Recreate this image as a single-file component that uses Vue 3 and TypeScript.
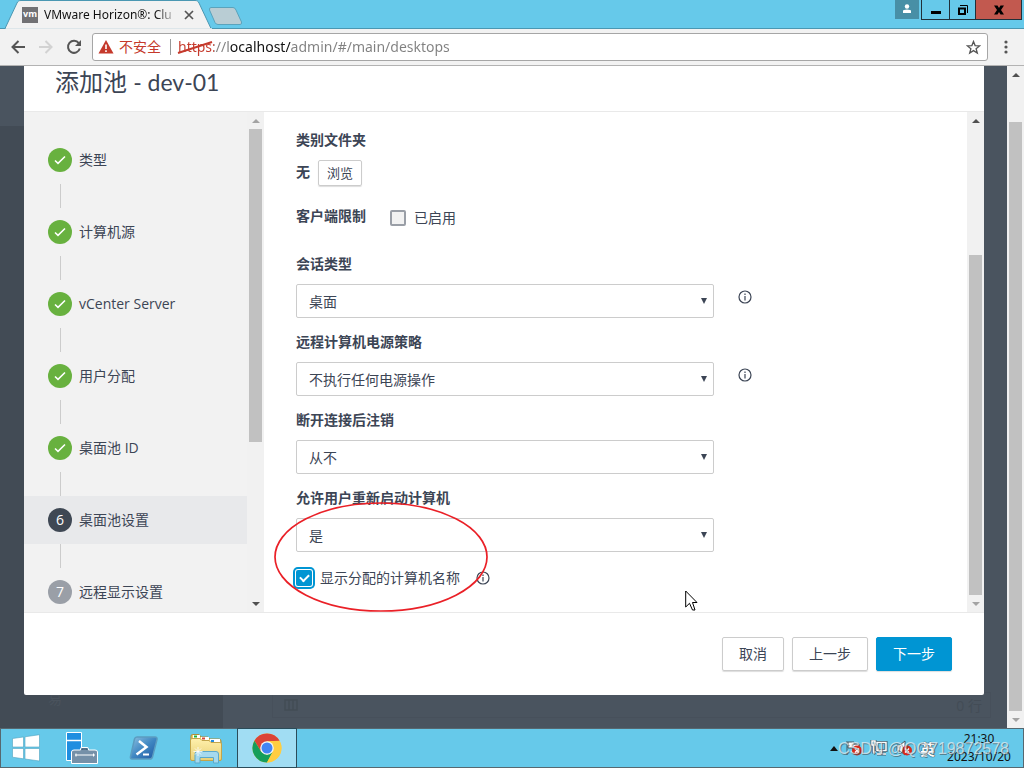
<script setup lang="ts">
import { ref } from 'vue'

interface Step {
  label: string
  state: 'done' | 'current' | 'todo'
}

interface SelectField {
  id: string
  label: string
  options: string[]
  info: boolean
}

const steps: Step[] = [
  { label: '类型', state: 'done' },
  { label: '计算机源', state: 'done' },
  { label: 'vCenter Server', state: 'done' },
  { label: '用户分配', state: 'done' },
  { label: '桌面池 ID', state: 'done' },
  { label: '桌面池设置', state: 'current' },
  { label: '远程显示设置', state: 'todo' },
]

const fields: SelectField[] = [
  { id: 'session-type', label: '会话类型', options: ['桌面'], info: true },
  { id: 'power-policy', label: '远程计算机电源策略', options: ['不执行任何电源操作'], info: true },
  { id: 'logoff', label: '断开连接后注销', options: ['从不'], info: false },
]

const address = ref('https://localhost/admin/#/main/desktops')
const restricted = ref(false)
const showName = ref(true)
</script>

<template>
  <div class="screen">
    <header class="tabstrip">
      <div class="tab">
        <svg class="tab-shape" viewBox="0 0 208 29" preserveAspectRatio="none" aria-hidden="true">
          <path d="M0 28.5 L12 3 C13 1 14 .5 16 .5 H190 C192 .5 193 1 194 3 L206 28.5" fill="#f2f2f2" stroke="#4a97b2" />
          <path d="M1 29 H207" stroke="#f2f2f2" stroke-width="1.4" />
        </svg>
        <span class="favicon">vm</span>
        <span class="tab-title">VMware Horizon®: Clu</span>
        <button class="tab-close" aria-label="Close tab">
          <svg width="10" height="10" viewBox="0 0 10 10"><path d="M1 1 9 9M9 1 1 9" stroke="#555" stroke-width="1.7" /></svg>
        </button>
      </div>
      <button class="new-tab" aria-label="New tab">
        <svg width="36" height="19" viewBox="0 0 36 19"><path d="M3 .5H25Q27 .5 28 3L33.500 15Q34 17.500 32 17.500H10Q8 17.500 7 15.500L1.500 3Q1 .5 3 .5Z" fill="#b9cdd4" stroke="#5aa3bc" /></svg>
      </button>
      <div class="window-buttons">
        <button class="wb user" aria-label="User">
          <svg width="10" height="10" viewBox="0 0 10 10" fill="#fff"><circle cx="5" cy="2.500" r="2.200" /><path d="M1 9V7Q1 5.500 5 5.500T9 7V9Z" /></svg>
        </button>
        <button class="wb min" aria-label="Minimize"><svg width="10" height="10" viewBox="0 0 10 10"><path d="M0 6H10V9H0Z" /></svg></button>
        <button class="wb restore" aria-label="Restore">
          <svg width="10" height="10" viewBox="0 0 10 10" fill="none" stroke="#000"><path d="M1 3.500H7V9H1Z" stroke-width="2" /><path d="M2 .5H9.500V8" /></svg>
        </button>
        <button class="wb close" aria-label="Close"><svg width="10" height="10" viewBox="0 0 10 10"><path d="M0 .5H3.500L5 3 6.500.5H10L7 5 10 9.500H6.500L5 7 3.500 9.500H0L3 5Z" /></svg></button>
      </div>
    </header>

    <nav class="toolbar">
      <button class="nav-btn" aria-label="Back"><svg width="16" height="16" viewBox="0 0 16 16"><path d="M15 8H2.500M8.500 2 2.500 8 8.500 14" fill="none" stroke="#555" stroke-width="2" /></svg></button>
      <button class="nav-btn" aria-label="Forward"><svg width="16" height="16" viewBox="0 0 16 16"><path d="M1 8H13.500M7.500 2 13.500 8 7.500 14" fill="none" stroke="#d2d2d2" stroke-width="2" /></svg></button>
      <button class="nav-btn" aria-label="Reload"><svg width="16" height="16" viewBox="0 0 16 16"><path d="M12.800 4.200A6 6 0 1 0 13.800 9.500" fill="none" stroke="#555" stroke-width="2" /><path d="M15 1V7H9Z" fill="#555" /></svg></button>
      <div class="address">
        <svg class="warn" width="16" height="14" viewBox="0 0 16 14"><path d="M8 0 15.500 13.500H.5Z" fill="#c5392b" /><path d="M7.200 4.500H8.800V9H7.200ZM7.200 10.200H8.800V12H7.200Z" fill="#fff" /></svg>
        <span class="unsafe">不安全</span>
        <span class="divider"></span>
        <div class="url-wrap">
          <input v-model="address" class="url" type="text" aria-label="Address" />
          <svg class="strike" width="38" height="16" viewBox="0 0 38 16"><path d="M1 14 35 3" stroke="#c5392b" stroke-width="2" /></svg>
        </div>
        <button class="star" aria-label="Bookmark"><svg width="15" height="15" viewBox="0 0 15 15"><path d="M7.500 1.500 9.100 5.600 13.600 5.900 10.100 8.700 11.300 13 7.500 10.600 3.700 13 4.900 8.700 1.400 5.900 5.900 5.600Z" fill="none" stroke="#555" stroke-width="1.300" /></svg></button>
      </div>
      <button class="menu" aria-label="Menu"><svg width="4" height="14" viewBox="0 0 4 14" fill="#555"><circle cx="2" cy="2" r="1.600" /><circle cx="2" cy="7" r="1.600" /><circle cx="2" cy="12" r="1.600" /></svg></button>
    </nav>

    <main class="page">
      <div class="backdrop" aria-hidden="true">
        <div class="back-nav"><span>易</span></div>
        <div class="back-main">
          <div class="back-box"><svg width="14" height="12" viewBox="0 0 14 12"><path d="M1 1H13V11H1ZM5 1V11M9 1V11" fill="none" stroke="#434c56" stroke-width="1.500" /></svg><span>0 行</span></div>
        </div>
      </div>

      <div class="stage">
        <section class="modal" role="dialog" aria-labelledby="dialog-title">
          <h1 id="dialog-title" class="modal-title">添加池 <span class="pool">- dev-01</span></h1>
          <div class="modal-body">
            <ol class="steps">
              <li v-for="(step, i) in steps" :key="step.label" class="step">
                <button class="step-btn" :class="step.state">
                  <span class="badge">
                    <svg v-if="step.state === 'done'" width="12" height="10" viewBox="0 0 12 10"><path d="M1 5.500 4 8.300 11 1.500" fill="none" stroke="#fff" stroke-width="1.600" /></svg>
                    <template v-else>{{ i + 1 }}</template>
                  </span>
                  <span>{{ step.label }}</span>
                </button>
              </li>
            </ol>
            <div class="scroll side-scroll"><i class="up off"></i><b class="lead"></b><b class="thumb"></b><b class="rest"></b><i class="down"></i></div>

            <form class="content" @submit.prevent>
              <div class="label">类别文件夹</div>
              <div class="folder"><span class="none">无</span><button type="button" class="browse">浏览</button></div>
              <div class="restrict">
                <span class="label">客户端限制</span>
                <label class="check"><input v-model="restricted" type="checkbox" />已启用</label>
              </div>
              <div v-for="f in fields" :key="f.id" class="field">
                <label class="label" :for="f.id">{{ f.label }}</label>
                <div class="control">
                  <div class="select-wrap">
                    <select :id="f.id"><option v-for="o in f.options" :key="o">{{ o }}</option></select>
                  </div>
                  <svg v-if="f.info" class="info" width="14" height="14" viewBox="0 0 14 14"><circle cx="7" cy="7" r="6" fill="none" stroke="#3c4555" stroke-width="1.200" /><path d="M7 3.500V5M7 6V10.500" fill="none" stroke="#3c4555" stroke-width="1.200" /></svg>
                </div>
              </div>
              <div class="marked">
                <div class="field">
                  <label class="label" for="restart">允许用户重新启动计算机</label>
                  <div class="control"><div class="select-wrap"><select id="restart"><option>是</option></select></div></div>
                </div>
                <div class="name-row">
                  <label class="check"><input v-model="showName" type="checkbox" />显示分配的计算机名称</label>
                  <svg width="14" height="14" viewBox="0 0 14 14"><circle cx="7" cy="7" r="6" fill="none" stroke="#3c4555" stroke-width="1.200" /><path d="M7 3.500V5M7 6V10.500" fill="none" stroke="#3c4555" stroke-width="1.200" /></svg>
                </div>
                <svg class="ellipse" width="214" height="110" viewBox="0 0 214 110" aria-hidden="true"><ellipse cx="107" cy="55" rx="106" ry="54" fill="none" stroke="#ea2027" stroke-width="1.700" /></svg>
              </div>
            </form>
            <div class="scroll main-scroll"><i class="up"></i><b class="lead"></b><b class="thumb"></b><b class="rest"></b><i class="down off"></i></div>
          </div>
          <footer class="modal-footer">
            <button class="btn">取消</button>
            <button class="btn">上一步</button>
            <button class="btn primary">下一步</button>
          </footer>
        </section>
      </div>
      <div class="scroll page-scroll"><i class="up"></i><b class="lead"></b><b class="thumb"></b><b class="rest"></b><i class="down off"></i></div>
    </main>

    <footer class="taskbar">
      <button class="start" aria-label="Start">
        <svg width="28" height="28" viewBox="0 0 28 28"><path d="M.5 4.500 11.500 3V13H.5ZM13 2.800 27.500.7V13H13ZM.5 14.500H11.500V24.800L.5 23.200ZM13 14.500H27.500V27L13 25Z" fill="#fff" stroke="#4fa3bf" stroke-width=".6" /></svg>
      </button>
      <button class="task" aria-label="Server Manager">
        <svg width="34" height="34" viewBox="0 0 34 34"><path d="M1.500 1.500H16.500V29.500H1.500Z" fill="#1f8ee0" stroke="#fff" /><path d="M1.500 9.500H16.500" stroke="#fff" stroke-width="1.500" /><path d="M15.500 19V17.500Q15.500 16.500 17 16.500H22Q23.500 16.500 23.500 17.500V19H30Q32.500 19 32.500 21V32.500H6.500V21Q6.500 19 9 19Z" fill="#7590a8" stroke="#fff" /><path d="M17 19V18H22V19" fill="none" stroke="#34556e" /><path d="M10 24H30M11 22.500V25.500M28.500 22.500V25.500" stroke="#fff" /></svg>
      </button>
      <button class="task" aria-label="PowerShell">
        <svg width="30" height="26" viewBox="0 0 30 26"><defs><linearGradient id="ps" x1="0" y1="0" x2="1" y2="1"><stop offset="0" stop-color="#8fc2e2" /><stop offset=".5" stop-color="#3f87c2" /><stop offset="1" stop-color="#1f55a0" /></linearGradient></defs><path d="M8 2H26Q28.500 2 28 4.500L23.500 22Q23 24 20.500 24H3Q1 24 1.500 21.500L5.500 4Q6 2 8 2Z" fill="url(#ps)" stroke="#5b9cc0" stroke-width="1.500" /><path d="M10 6 17.500 12 7.500 19.500" fill="none" stroke="#fff" stroke-width="2.500" /><path d="M14 19.500H20" stroke="#fff" stroke-width="2" /></svg>
      </button>
      <button class="task" aria-label="File Explorer">
        <svg width="34" height="32" viewBox="0 0 34 32"><defs><linearGradient id="fo" x1="0" y1="0" x2="0" y2="1"><stop offset="0" stop-color="#fff0ad" /><stop offset="1" stop-color="#e8d075" /></linearGradient></defs><path d="M2 28V4Q2 2.500 3.500 2.500H10L12 5H19L21 7H30Q32 7 32 9V28Z" fill="#eacb68" stroke="#b18f36" /><path d="M4 3H11V6H4ZM12 5H20V8H12ZM21 7H31V10H21Z" fill="#fff" /><path d="M5 3.500H8V5.500H5Z" fill="#20b23b" /><path d="M13 5.500H16V7.500H13Z" fill="#d84836" /><path d="M22 8H25V10H22Z" fill="#248de0" /><path d="M1.500 8Q1.500 6.500 3 6.500H11L13 8.500H20L22 10.500H31Q32.500 10.500 32.500 12V27Q32.500 28.500 31 28.500H3Q1.500 28.500 1.500 27Z" fill="url(#fo)" stroke="#c3a54b" /><path d="M6 31V22Q6 19.500 8.500 19.500H27Q29.500 19.500 29.500 22V31H24.500V25.500H11V31Z" fill="#a5d9ee" stroke="#5ba9ca" /><path d="M9 15V24M4.500 19.500H13.500M6 16.500 12 22.500M12 16.500 6 22.500" stroke="#fff" stroke-width=".8" /></svg>
      </button>
      <button class="task active" aria-label="Chrome">
        <svg width="30" height="30" viewBox="0 0 30 30"><circle cx="15" cy="15" r="14.500" fill="#ffcd40" /><path d="M2.440 7.750A14.500 14.500 0 0 1 27.560 7.750L15 8.200 9.100 18.500Z" fill="#db4437" /><path d="M2.440 7.750 9.100 18.500 15 21.800 20.900 18.400 15 29.500A14.500 14.500 0 0 1 2.440 7.750Z" fill="#159e5b" /><path d="M15 8.200H27.800A14.500 14.500 0 0 1 15 29.500L20.900 18.400Z" fill="#ffcd40" /><circle cx="15" cy="15" r="6.800" fill="#f4f7f5" /><circle cx="15" cy="15" r="5.500" fill="#4285f4" /></svg>
      </button>
      <div class="tray">
        <svg width="8" height="5" viewBox="0 0 8 5"><path d="M0 5 4 0 8 5Z" fill="#111" /></svg>
        <svg width="18" height="16" viewBox="0 0 18 16"><path d="M2 1V15M3 2H9V4H14V10H8V8H3Z" fill="#fff" stroke="#455761" /><circle cx="12" cy="10.500" r="5" fill="#d9291c" /><path d="M10 8.500 14 12.500M14 8.500 10 12.500" stroke="#fff" stroke-width="1.300" /></svg>
        <svg width="18" height="16" viewBox="0 0 18 16" fill="none" stroke="#fff" stroke-width="1.500"><path d="M7 2.500H16V10.500H7ZM11.500 11V14M7 14H16M2 1H5V5H2ZM3.500 5V12H6" stroke="#3c5967" stroke-width="3" /><path d="M7 2.500H16V10.500H7ZM11.500 11V14M7 14H16M2 1H5V5H2ZM3.500 5V12H6" /></svg>
        <svg width="18" height="16" viewBox="0 0 18 16"><path d="M2 5H5L10 1V15L5 11H2Z" fill="#fff" stroke="#455761" /><circle cx="12" cy="10.500" r="5" fill="#d9291c" /><path d="M10 8.500 14 12.500M14 8.500 10 12.500" stroke="#fff" stroke-width="1.300" /></svg>
        <span class="ime">英</span>
      </div>
      <div class="clock"><span>21:30</span><span>2023/10/20</span></div>
      <span class="watermark">CSDN @QQ719872578</span>
    </footer>

    <svg class="pointer" width="13" height="21" viewBox="0 0 13 21" aria-hidden="true"><path d="M.7 1V17L4.500 13.300 7.500 20H10L7.500 12.500H12Z" fill="#fff" stroke="#000" /></svg>
  </div>
</template>

<style>
html,
body {
  margin: 0;
  overflow: hidden;
}
</style>

<style scoped>
.screen,
.screen * {
  box-sizing: border-box;
}
.screen {
  position: relative;
  display: flex;
  flex-direction: column;
  height: 100vh;
  font-family: 'Open Sans', 'Noto Sans CJK SC', sans-serif;
  font-size: 14px;
  color: #3c4555;
}
button,
input,
select {
  margin: 0;
  padding: 0;
  border: 0;
  background: none;
  font: inherit;
  color: inherit;
}
svg {
  display: block;
  flex: none;
}

.tabstrip {
  display: flex;
  height: 29px;
  padding-left: 5px;
  background: #66c9ea;
  border-bottom: 1px solid #4a97b2;
}
.tab {
  position: relative;
  display: flex;
  align-items: center;
  width: 208px;
  height: 29px;
  padding-left: 17px;
}
.tab-shape {
  position: absolute;
  inset: 0;
  width: 100%;
  height: 100%;
}
.favicon {
  position: relative;
  width: 16px;
  height: 16px;
  background: #717174;
  color: #fff;
  font: bold 9px/14px 'Open Sans', sans-serif;
  text-align: center;
}
.tab-title {
  position: relative;
  width: 133px;
  margin-left: 6px;
  overflow: hidden;
  font-family: 'Noto Sans', sans-serif;
  font-size: 12px;
  line-height: 18px;
  white-space: nowrap;
  background: linear-gradient(90deg, #111 112px, #e5e5e5 133px);
  background-clip: text;
  color: transparent;
}
.tab-close {
  position: relative;
  margin-left: 7px;
}
.new-tab {
  height: 19px;
  margin: 7px 0 0 -5px;
}
.window-buttons {
  display: flex;
  margin-left: auto;
  margin-right: 2px;
}
.wb {
  display: flex;
  align-items: center;
  justify-content: center;
  height: 20px;
  border: solid #20303a;
  border-width: 0 1px 1px 0;
}
.user {
  width: 24px;
  height: 19px;
  margin-right: 2px;
  padding-bottom: 2px;
  border: 0;
  background: #488fa6;
}
.min {
  width: 29px;
  border-left-width: 1px;
}
.restore {
  width: 26px;
}
.close {
  width: 46px;
  background: #c2594f;
}

.toolbar {
  display: flex;
  align-items: center;
  height: 37px;
  padding-left: 10px;
  background: #f2f2f2;
  border-bottom: 1px solid #b3b3b3;
}
.nav-btn {
  width: 16px;
  margin-right: 12px;
}
.address {
  display: flex;
  flex: 1;
  align-items: center;
  height: 28px;
  margin-left: -2px;
  padding: 0 6px 0 5px;
  border: 1px solid #a6a6a6;
  border-radius: 3px;
  background: #fff;
}
.unsafe {
  margin-left: 5px;
  color: #c5392b;
  line-height: 20px;
}
.divider {
  width: 1px;
  height: 16px;
  margin: 0 7px 0 9px;
  background: #999;
}
.url-wrap {
  position: relative;
  flex: 1;
}
.url {
  display: block;
  width: 100%;
  height: 24px;
  outline: 0;
  font-family: 'Noto Sans', sans-serif;
  line-height: 24px;
  background: linear-gradient(90deg, #c5392b 36px, #808080 36px, #808080 52px, #111 52px, #111 113px, #808080 113px);
  background-clip: text;
  -webkit-text-fill-color: transparent;
}
.strike {
  position: absolute;
  left: -1px;
  top: 4px;
}
.menu {
  width: 36px;
  display: flex;
  justify-content: center;
}

.page {
  position: relative;
  display: flex;
  flex: 1;
  min-height: 0;
  background: #4a545f;
}
.backdrop {
  position: absolute;
  inset: 0;
  display: flex;
  padding-top: 60px;
  color: #434c56;
}
.back-nav {
  display: flex;
  flex-direction: column;
  justify-content: flex-end;
  width: 223px;
  padding: 0 0 20px 48px;
  background: #424b55;
  color: #4a535d;
}
.back-main {
  display: flex;
  flex: 1;
  align-items: flex-end;
  padding: 0 33px 10px 49px;
}
.back-box {
  display: flex;
  flex: 1;
  align-items: center;
  justify-content: space-between;
  height: 26px;
  padding: 0 8px 0 11px;
  border: 1px solid #47505b;
}
.stage {
  position: relative;
  display: flex;
  flex: 1;
  min-width: 0;
  padding: 0 23px 33px 24px;
}
.modal {
  display: flex;
  flex: 1;
  flex-direction: column;
  min-width: 0;
  background: #fff;
  border-radius: 0 0 2px 2px;
}
.modal-title {
  height: 46px;
  margin: 0;
  padding-left: 31px;
  border-bottom: 1px solid #e9e9e9;
  font: 400 24px/32px Lato, 'Noto Sans CJK SC', sans-serif;
}
.pool {
  font-size: 23px;
}
.modal-body {
  display: flex;
  flex: 1;
  min-height: 0;
}
.steps {
  width: 223px;
  margin: 0;
  padding: 24px 0 0;
  overflow: hidden;
  list-style: none;
  background: #f2f2f2;
}
.step + .step::before {
  content: '';
  display: block;
  width: 1px;
  height: 24px;
  margin-left: 36px;
  background: #ccc;
}
.step-btn {
  display: flex;
  align-items: center;
  gap: 7px;
  width: 100%;
  height: 48px;
  padding-left: 24px;
  line-height: 24px;
}
.current {
  background: #e8e9eb;
}
.badge {
  display: flex;
  align-items: center;
  justify-content: center;
  width: 24px;
  height: 24px;
  border-radius: 50%;
  background: #9a9fa7;
  color: #fff;
}
.done .badge {
  background: #68b13f;
}
.current .badge {
  background: #3f4854;
}

.scroll {
  display: flex;
  flex: none;
  flex-direction: column;
  width: 17px;
  padding: 0 2px;
  background: #f1f1f1;
}
.scroll i {
  display: flex;
  align-items: center;
  justify-content: center;
  height: 17px;
}
.scroll i::before {
  content: '';
  border: 4px solid transparent;
}
.scroll .up::before {
  border-top: 0;
  border-bottom-color: #505050;
}
.scroll .down::before {
  border-bottom: 0;
  border-top-color: #505050;
}
.scroll .up.off::before {
  border-bottom-color: #a3a3a3;
}
.scroll .down.off::before {
  border-top-color: #a3a3a3;
}
.thumb {
  background: #c1c1c1;
}
.side-scroll .thumb {
  flex: 313;
}
.side-scroll .rest {
  flex: 153;
}
.main-scroll .lead {
  flex: 126;
}
.main-scroll .thumb {
  flex: 340;
}
.page-scroll {
  position: relative;
}
.page-scroll .lead {
  flex: 39;
}
.page-scroll .thumb {
  flex: 589;
}

.content {
  flex: 1;
  min-width: 0;
  padding: 16px 32px 0;
  overflow: hidden;
}
.label {
  display: block;
  font-weight: 700;
  line-height: 24px;
}
.folder {
  display: flex;
  gap: 8px;
  margin-top: 8px;
}
.none {
  font-weight: 700;
  line-height: 24px;
}
.browse {
  height: 26px;
  padding: 0 8px;
  border: 1px solid #ccc;
  border-radius: 2px;
  font-size: 13px;
  line-height: 24px;
  box-shadow: 0 1px 1px #ddd;
}
.restrict {
  display: flex;
  gap: 24px;
  height: 28px;
  margin: 18px 0 20px;
}
.check {
  display: flex;
  align-items: center;
  gap: 8px;
  line-height: 24px;
}
.check input {
  display: flex;
  align-items: center;
  justify-content: center;
  width: 16px;
  height: 16px;
  appearance: none;
  border: 2px solid #9a9fa7;
  border-radius: 2px;
  background: #f2f2f2;
}
.check input:checked {
  border: 0;
  background: #0095d3;
  box-shadow: 0 0 0 1px #fff, 0 0 0 3px #0095d3;
}
.check input:checked::before {
  content: '';
  width: 7px;
  height: 4px;
  margin-bottom: 2px;
  border: solid #fff;
  border-width: 0 0 2px 2px;
  rotate: -45deg;
}
.field {
  margin-bottom: 12px;
}
.control {
  display: flex;
  gap: 24px;
  margin-top: 8px;
}
.select-wrap {
  position: relative;
  flex: 0 1 418px;
}
.select-wrap::after {
  content: '';
  position: absolute;
  right: 7px;
  top: 14px;
  border: solid transparent;
  border-width: 6px 3px 0;
  border-top-color: #3c4555;
  pointer-events: none;
}
select {
  display: block;
  width: 100%;
  height: 34px;
  padding: 0 24px 0 12px;
  appearance: none;
  border: 1px solid #ccc;
  border-radius: 2px;
}
.info {
  margin-top: 6px;
}
.marked {
  position: relative;
}
.name-row {
  display: flex;
  align-items: center;
  gap: 16px;
  height: 28px;
}
.ellipse {
  position: absolute;
  left: -22px;
  top: 16px;
}
.modal-footer {
  display: flex;
  justify-content: flex-end;
  gap: 8px;
  height: 83px;
  padding: 24px 32px 0;
  border-top: 1px solid #e9e9e9;
}
.btn {
  height: 34px;
  padding: 0 16px;
  border: 1px solid #ccc;
  border-radius: 2px;
  line-height: 32px;
  box-shadow: 0 1px 1px #ddd;
}
.primary {
  border-color: #0095d3;
  background: #0095d3;
  color: #fff;
}

.taskbar {
  position: relative;
  display: flex;
  height: 40px;
  background: #66c9ea;
  border: 1px solid #566870;
}
.taskbar button {
  display: flex;
  align-items: center;
  justify-content: center;
}
.start {
  width: 50px;
}
.task {
  width: 62px;
}
.taskbar .active {
  width: 60px;
  margin: -1px 0;
  border: 1px solid #2b4c59;
  background: #a1ddf3;
}
.tray {
  display: flex;
  align-items: center;
  gap: 7px;
  margin-left: auto;
}
.ime {
  color: #fff;
  font-weight: 700;
  font-size: 15px;
  text-shadow: 0 0 1px #223, 0 0 1px #223;
}
.clock {
  display: flex;
  flex-direction: column;
  align-items: center;
  justify-content: center;
  width: 88px;
  color: #111;
  font-family: 'Noto Sans', sans-serif;
  font-size: 12px;
  line-height: 18px;
}
.watermark {
  position: absolute;
  right: 14px;
  top: 8px;
  color: rgba(225, 235, 240, 0.75);
  font: 16px/24px 'Liberation Sans', sans-serif;
  text-shadow: 1px 1px 0 rgba(70, 80, 85, 0.6);
}
.pointer {
  position: absolute;
  left: 685px;
  top: 590px;
}
</style>
